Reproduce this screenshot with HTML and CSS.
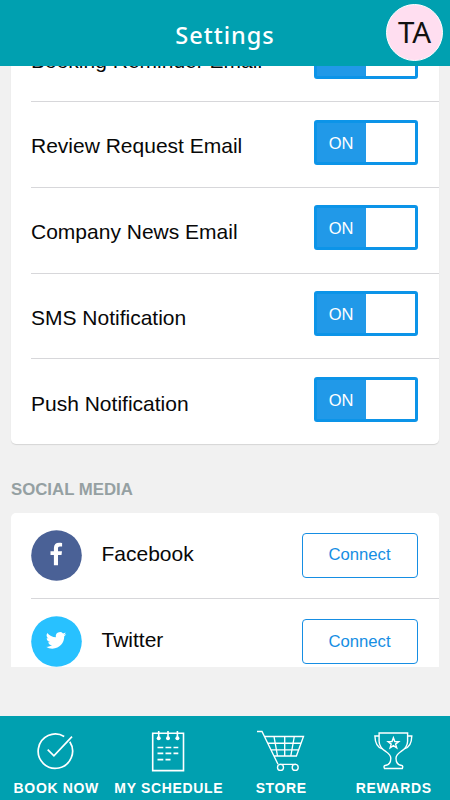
FILE: index.html
```html
<!DOCTYPE html>
<html lang="en">
<head>
<meta charset="utf-8">
<title>Settings</title>
<link rel="stylesheet" href="styles.css">
</head>
<body>
<div class="app">
  <header class="header">
    <h1 class="title">Settings</h1>
    <div class="avatar">TA</div>
  </header>
  <main class="content">
    <section class="card notifications">
      <div class="row"><span class="label">Booking Reminder Email</span><div class="toggle"><span>ON</span></div></div>
      <div class="row"><span class="label">Review Request Email</span><div class="toggle"><span>ON</span></div></div>
      <div class="row"><span class="label">Company News Email</span><div class="toggle"><span>ON</span></div></div>
      <div class="row"><span class="label">SMS Notification</span><div class="toggle"><span>ON</span></div></div>
      <div class="row"><span class="label">Push Notification</span><div class="toggle"><span>ON</span></div></div>
    </section>
    <h2 class="section-title">SOCIAL MEDIA</h2>
    <section class="card social">
      <div class="row">
        <svg class="brand" viewBox="0 0 51 51"><circle cx="25.5" cy="25.5" r="25.3" fill="#4a6196"/><path fill="#fff" d="M22.9 35.3V25.1h-3.4v-3.9h3.4v-3.3c0-3.4 2-5.2 5.1-5.2 1.5 0 2.7.1 3.1.2v3.6H29c-1.7 0-2 .8-2 2v2.7h4l-.5 3.9H27v10.2z"/></svg>
        <span class="label">Facebook</span><button class="connect">Connect</button>
      </div>
      <div class="row">
        <svg class="brand" viewBox="0 0 51 51"><circle cx="25.5" cy="25.5" r="25.3" fill="#28c1ff"/><path fill="#fff" transform="translate(14.9 14.2) scale(.85)" d="M23.95 4.57a10 10 0 0 1-2.82.77 4.96 4.96 0 0 0 2.16-2.72c-.95.55-2 .95-3.13 1.18a4.92 4.92 0 0 0-8.38 4.48C7.69 8.09 4.07 6.13 1.64 3.16a4.92 4.92 0 0 0 1.52 6.57 4.9 4.9 0 0 1-2.23-.61v.06c0 2.38 1.7 4.37 3.95 4.82a5 5 0 0 1-2.21.08 4.93 4.93 0 0 0 4.6 3.42A9.87 9.87 0 0 1 0 19.54a14 14 0 0 0 7.55 2.21c9.05 0 14-7.5 14-13.98 0-.21 0-.42-.02-.63a9.94 9.94 0 0 0 2.42-2.57z"/></svg>
        <span class="label">Twitter</span><button class="connect">Connect</button>
      </div>
    </section>
  </main>
  <nav class="nav">
    <a class="tab"><svg class="icon" viewBox="0 0 50 46"><g fill="none" stroke="#fff" stroke-width="1.7"><path d="M33.2 7.4A17.2 17.2 0 1 0 38.8 12.8"/><path d="M16.7 20.7l6.2 6.1L41 7.7"/></g></svg><span>BOOK NOW</span></a>
    <a class="tab"><svg class="icon" viewBox="0 0 50 46"><g fill="none" stroke="#fff" stroke-width="1.6"><path d="M8.7 4.3h30.8v37.3H8.7z"/><path d="M14.7 2v6.8M24 2v6.8M33.4 2v6.8M13.5 18.5h5.8M21.5 18.5h5.8M29.5 18.5h4.8M13.5 24.4h5.8M21.5 24.4h5.8M29.5 24.4h4.8M13.5 30.6h5.8M21.5 30.6h5"/></g><g fill="#fff"><circle cx="14.7" cy="9.2" r="2"/><circle cx="24" cy="9.2" r="2"/><circle cx="33.4" cy="9.2" r="2"/></g></svg><span>MY SCHEDULE</span></a>
    <a class="tab"><svg class="icon" viewBox="0 0 50 46"><g fill="none" stroke="#fff" stroke-width="1.35"><path d="M1 2.5h5L22 35.3M8.5 7.5h39L40.4 27H18M12 14.2h33.1M15.1 20.8h27.6M18 7.5l3.5 19.5M28.7 7.5v19.5M38.3 7.5L34.8 27M23.5 35.3H40"/><circle cx="24.5" cy="38.4" r="3"/><circle cx="39.2" cy="38.4" r="3"/></g></svg><span>STORE</span></a>
    <a class="tab"><svg class="icon" viewBox="0 0 50 46"><g transform="translate(-.6)" fill="none" stroke="#fff" stroke-width="1.4"><path d="M10.7 4h28.5v8.2c0 5-3.2 8.1-6.8 10.5-2.5 1.7-4.8 3.2-4.8 6.5 0 4.8 2.4 6.9 5.8 7.3 1 .2 1.2 1.2.5 3H16.1c-.8-1.8-.5-2.8.5-3 3.5-.4 5.8-2.5 5.8-7.3 0-3.3-2.3-4.8-4.8-6.5-3.7-2.4-6.9-5.5-6.9-10.5z"/><path d="M10.7 7H6.5c.2 7 2 11.5 7.5 12.9M39.2 7h4.2c-.2 7-2 11.5-7.5 12.9"/><path d="M25 8.8l1.4 3.7 3.9.2-3.1 2.4 1.1 3.8-3.3-2.2-3.3 2.2 1.1-3.8-3.1-2.4 3.9-.2z"/></g></svg><span>REWARDS</span></a>
  </nav>
</div>
</body>
</html>
```
FILE: styles.css
```css
* { box-sizing: border-box; }
body { margin: 0; font-family: "Liberation Sans", Arial, sans-serif; }
.app { width: 450px; height: 800px; display: flex; flex-direction: column; overflow: hidden; background: #f1f1f1; }
.header { position: relative; z-index: 1; flex: none; height: 66px; background: #00a0b0; display: flex; justify-content: center; }
.title { margin: 0; padding-top: 5px; font: 500 23.5px/60px "Noto Sans", sans-serif; letter-spacing: 1px; color: #fff; }
.avatar { position: absolute; left: 386px; top: 4px; width: 57px; height: 57px; border: 1.5px solid #fff; border-radius: 50%; background: #ffdef0; color: #111; font: 29.5px/54px "Noto Sans", sans-serif; text-align: center; }
.content { flex: none; height: 601px; padding: 0 11px; overflow: hidden; display: flex; flex-direction: column; }
.card { flex: none; background: #fff; border-radius: 5px; }
.notifications { margin-top: -49.9px; height: 428.2px; box-shadow: 0 1px 1px #d5d5d5; }
.row { height: 85.8px; margin-left: 20px; padding-right: 21px; display: flex; align-items: center; border-bottom: 1px solid #d7d7da; }
.row:last-child { border-bottom: 0; }
.label { flex: 1; font-size: 21px; line-height: 26px; color: #080808; white-space: nowrap; padding-top: 4px; }
.toggle { width: 104px; height: 45px; margin-bottom: 4.6px; border: 3px solid #0c94e8; border-radius: 3px; background: linear-gradient(90deg, #2199e8 49px, #fff 49px); color: #fff; font-size: 16.5px; line-height: 41px; }
.toggle span { display: block; width: 49px; text-align: center; padding-right: 1px; }
.section-title { flex: none; margin: 33px 0 11px; font-size: 16.8px; line-height: 25px; color: #95a0a2; }
.brand { width: 51px; height: 51px; margin-right: 19.5px; flex: none; }
.social .row { padding-bottom: .6px; }
.social .label { padding: 0 0 2.5px; }
.connect { width: 116px; height: 45px; padding: 0 1px 0 0; border: 1.5px solid #168ee3; border-radius: 4px; background: #fff; color: #168ee3; font: 16.7px "Liberation Sans", Arial, sans-serif; }
.nav { flex: none; height: 84px; margin-top: 49px; background: #00a0b0; display: grid; grid-template-columns: repeat(4, 1fr); }
.tab { display: flex; flex-direction: column; align-items: center; padding-top: 13px; color: #fff; font-size: 14px; font-weight: bold; line-height: 26px; letter-spacing: .65px; white-space: nowrap; }
.icon { width: 50px; height: 46px; flex: none; }
```
